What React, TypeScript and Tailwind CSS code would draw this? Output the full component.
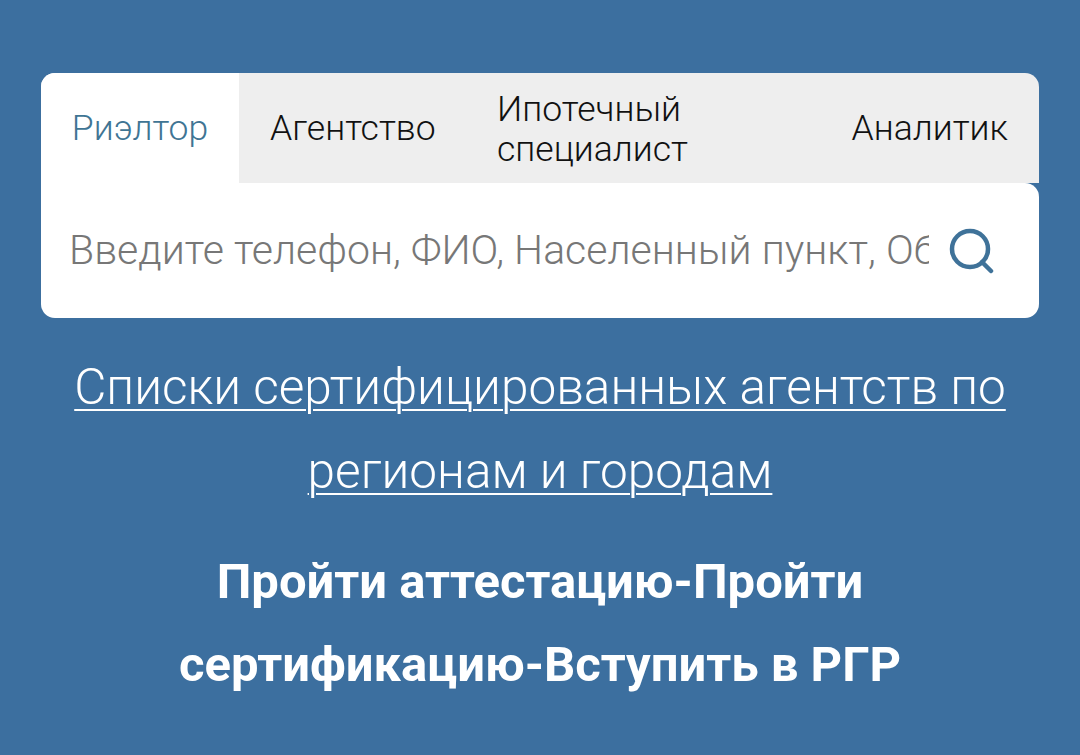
export default function App() {
  return (
    <div className="w-[1080px] h-[755px] overflow-hidden bg-[#3c6f9f] pt-[73px] px-[41px] text-center font-[Roboto,sans-serif]">
      <div className="flex h-[110px] rounded-t-[14px] overflow-hidden bg-[#eeeeee] text-[35.5px] font-light leading-[40px] text-[#111]">
        <div className="w-[198px] bg-white flex items-center justify-center text-[#3f7594]">Риэлтор</div>
        <div className="w-[228px] flex items-center pl-[31px]">Агентство</div>
        <div className="w-[354px] flex items-center pl-[30px] pt-[2px] text-left">Ипотечный<br />специалист</div>
        <div className="flex-1 flex items-center justify-end pr-[31px]">Аналитик</div>
      </div>
      <div className="flex items-center h-[135px] bg-white rounded-b-[14px] rounded-tr-[14px] pl-[28px] pr-[44px] text-[41px] font-light text-[#777]">
        <div className="w-[860px] overflow-hidden whitespace-nowrap text-left">Введите телефон, ФИО, Населенный пункт, Объект</div>
        <svg className="ml-auto" width="46" height="46" viewBox="0 0 46 46" fill="none" stroke="#3f7299" strokeWidth="4.5" strokeLinecap="round">
          <circle cx="21" cy="21" r="18" />
          <path d="M33 34l9 9" />
        </svg>
      </div>
      <div className="mt-[27px] text-[49.5px] font-light leading-[84px] text-white underline decoration-2 underline-offset-[5px]">
        Списки сертифицированных агентств по<br />регионам и городам
      </div>
      <div className="mt-[27px] text-[49px] font-bold leading-[83px] text-white">
        Пройти аттестацию-Пройти<br />сертификацию-Вступить в РГР
      </div>
    </div>
  );
}
